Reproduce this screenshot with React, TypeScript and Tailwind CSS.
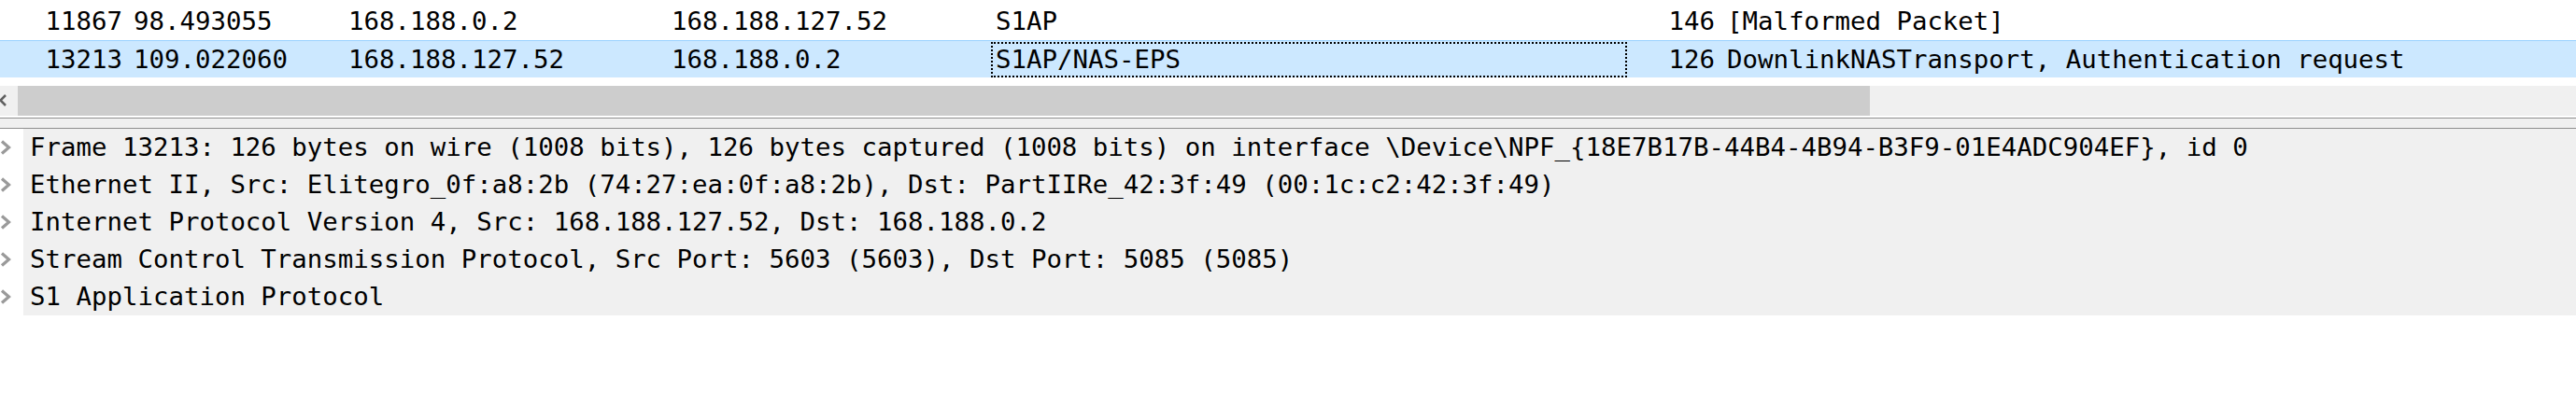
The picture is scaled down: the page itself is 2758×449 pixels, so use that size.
import React from "react";

type Packet = {
  no: string;
  time: string;
  src: string;
  dst: string;
  proto: string;
  len: string;
  info: string;
};

const packets: Packet[] = [
  {
    no: "11867",
    time: "98.493055",
    src: "168.188.0.2",
    dst: "168.188.127.52",
    proto: "S1AP",
    len: "146",
    info: "[Malformed Packet]",
  },
  {
    no: "13213",
    time: "109.022060",
    src: "168.188.127.52",
    dst: "168.188.0.2",
    proto: "S1AP/NAS-EPS",
    len: "126",
    info: "DownlinkNASTransport, Authentication request",
  },
];

const details = [
  "Frame 13213: 126 bytes on wire (1008 bits), 126 bytes captured (1008 bits) on interface \\Device\\NPF_{18E7B17B-44B4-4B94-B3F9-01E4ADC904EF}, id 0",
  "Ethernet II, Src: Elitegro_0f:a8:2b (74:27:ea:0f:a8:2b), Dst: PartIIRe_42:3f:49 (00:1c:c2:42:3f:49)",
  "Internet Protocol Version 4, Src: 168.188.127.52, Dst: 168.188.0.2",
  "Stream Control Transmission Protocol, Src Port: 5603 (5603), Dst Port: 5085 (5085)",
  "S1 Application Protocol",
];

function PacketRow({ p, selected }: { p: Packet; selected?: boolean }) {
  return (
    <div
      className={
        selected
          ? "flex h-[40px] shrink-0 items-center bg-[#cce8ff] border-t border-[#99d1ff] whitespace-pre leading-[36px]"
          : "flex h-[40px] shrink-0 items-center whitespace-pre"
      }
    >
      <div className="w-[137px] pr-[6px] text-right">{p.no}</div>
      <div className="w-[230px] pl-[6px]">{p.time}</div>
      <div className="w-[346px] pl-[6px]">{p.src}</div>
      <div className="w-[348px] pl-[6px]">{p.dst}</div>
      <div
        className={
          selected
            ? "w-[681px] h-[38px] flex items-center pl-[3px] border-2 border-dotted border-black"
            : "w-[681px] pl-[5px]"
        }
      >
        {p.proto}
      </div>
      <div className="w-[100px] pr-[6px] text-right">{p.len}</div>
      <div className="flex-1 pl-[7px]">{p.info}</div>
    </div>
  );
}

function Chevron() {
  return (
    <svg width="14" height="16" viewBox="0 0 14 16">
      <polyline
        points="2,1.5 9.5,8 2,14.5"
        fill="none"
        stroke="#9a9a9a"
        strokeWidth="3.2"
      />
    </svg>
  );
}

export default function App() {
  return (
    <div className="w-[2758px] h-[449px] bg-white overflow-hidden text-black font-['DejaVu_Sans_Mono',monospace] text-[27.4px] leading-[40px]">
      {/* packet list */}
      <div className="h-[92px] overflow-hidden flex flex-col">
        <div className="h-[3px] shrink-0" />
        <PacketRow p={packets[0]} />
        <PacketRow p={packets[1]} selected />
      </div>

      {/* horizontal scrollbar */}
      <div className="h-[32px] flex bg-[#f0f0f0]">
        <div className="w-[19px] flex items-center">
          <svg width="19" height="32" viewBox="0 0 19 32">
            <polyline
              points="6,10 0.5,15.5 6,21"
              fill="none"
              stroke="#606060"
              strokeWidth="2.5"
            />
          </svg>
        </div>
        <div className="w-[1983px] bg-[#cdcdcd]" />
      </div>

      {/* splitter */}
      <div className="h-[2px] bg-white" />
      <div className="h-[1px] bg-[#8f8f8f]" />
      <div className="h-[10px] bg-[#f0f0f0]" />
      <div className="h-[1px] bg-[#8f8f8f]" />

      {/* packet details */}
      <div className="flex flex-col">
        {details.map((d) => (
          <div key={d} className="flex h-[40px]">
            <div className="w-[25px] flex items-center bg-white">
              <Chevron />
            </div>
            <div className="flex-1 bg-[#f0f0f0] pl-[7px] whitespace-pre">{d}</div>
          </div>
        ))}
      </div>
    </div>
  );
}
